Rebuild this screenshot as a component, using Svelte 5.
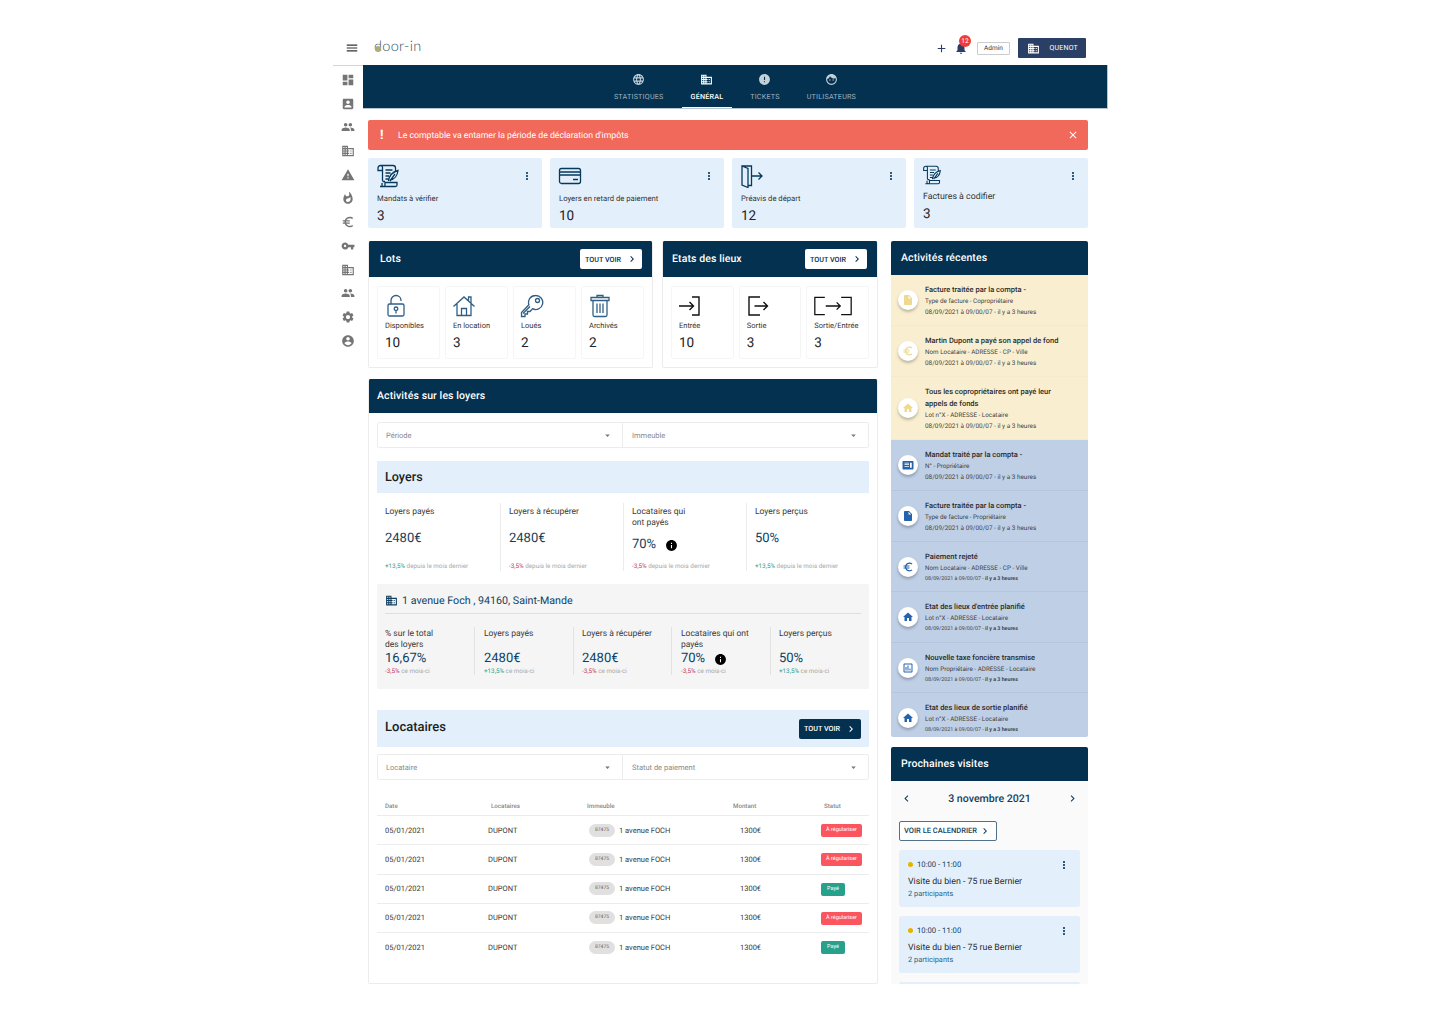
<script>
  // material icon paths
  const icons = {
    menu: 'M3 18h18v-2H3v2zm0-5h18v-2H3v2zm0-7v2h18V6H3z',
    dashboard: 'M3 13h8V3H3v10zm0 8h8v-6H3v6zm10 0h8V11h-8v10zm0-18v6h8V3h-8z',
    contact: 'M3 5v14c0 1.1.89 2 2 2h14c1.1 0 2-.9 2-2V5c0-1.1-.9-2-2-2H5c-1.11 0-2 .9-2 2zm12 4c0 1.66-1.34 3-3 3s-3-1.34-3-3 1.34-3 3-3 3 1.34 3 3zm-9 8c0-2 4-3.1 6-3.1s6 1.1 6 3.1v1H6v-1z',
    people: 'M16 11c1.66 0 2.99-1.34 2.99-3S17.66 5 16 5c-1.66 0-3 1.34-3 3s1.34 3 3 3zm-8 0c1.66 0 2.99-1.34 2.99-3S9.66 5 8 5C6.34 5 5 6.34 5 8s1.34 3 3 3zm0 2c-2.33 0-7 1.17-7 3.5V19h14v-2.5c0-2.33-4.67-3.5-7-3.5zm8 0c-.29 0-.62.02-.97.05 1.16.84 1.97 1.97 1.97 3.45V19h6v-2.5c0-2.33-4.67-3.5-7-3.5z',
    domain: 'M12 7V3H2v18h20V7H12zM6 19H4v-2h2v2zm0-4H4v-2h2v2zm0-4H4V9h2v2zm0-4H4V5h2v2zm4 12H8v-2h2v2zm0-4H8v-2h2v2zm0-4H8V9h2v2zm0-4H8V5h2v2zm10 12h-8v-2h2v-2h-2v-2h2v-2h-2V9h8v10zm-2-8h-2v2h2v-2zm0 4h-2v2h2v-2z',
    warning: 'M1 21h22L12 2 1 21zm12-3h-2v-2h2v2zm0-4h-2v-4h2v4z',
    fire: 'M13.5.67s.74 2.65.74 4.8c0 2.06-1.35 3.73-3.41 3.73-2.07 0-3.63-1.67-3.63-3.73l.03-.36C5.21 7.51 4 10.62 4 14c0 4.42 3.58 8 8 8s8-3.58 8-8C20 8.61 17.41 3.8 13.5.67zM11.71 19c-1.78 0-3.22-1.4-3.22-3.14 0-1.62 1.05-2.76 2.81-3.12 1.77-.36 3.6-1.21 4.62-2.58.39 1.29.59 2.65.59 4.04 0 2.65-2.15 4.8-4.8 4.8z',
    euro: 'M15 18.5c-2.51 0-4.68-1.42-5.76-3.5H15v-2H8.58c-.05-.33-.08-.66-.08-1s.03-.67.08-1H15V9H9.24C10.32 6.92 12.5 5.5 15 5.5c1.61 0 3.09.59 4.23 1.57L21 5.3C19.41 3.87 17.3 3 15 3c-3.92 0-7.24 2.51-8.48 6H3v2h3.06c-.04.33-.06.66-.06 1 0 .34.02.67.06 1H3v2h3.52c1.24 3.49 4.56 6 8.48 6 2.31 0 4.41-.87 6-2.3l-1.78-1.77c-1.13.98-2.6 1.57-4.22 1.57z',
    key: 'M12.65 10C11.83 7.67 9.61 6 7 6c-3.31 0-6 2.69-6 6s2.69 6 6 6c2.61 0 4.83-1.67 5.65-4H17v4h4v-4h2v-4H12.65zM7 14c-1.1 0-2-.9-2-2s.9-2 2-2 2 .9 2 2-.9 2-2 2z',
    settings: 'M19.14 12.94c.04-.3.06-.61.06-.94 0-.32-.02-.64-.07-.94l2.03-1.58c.18-.14.23-.41.12-.61l-1.92-3.32c-.12-.22-.37-.29-.59-.22l-2.39.96c-.5-.38-1.03-.7-1.62-.94l-.36-2.54c-.04-.24-.24-.41-.48-.41h-3.84c-.24 0-.43.17-.47.41l-.36 2.54c-.59.24-1.13.57-1.62.94l-2.39-.96c-.22-.08-.47 0-.59.22L2.74 8.87c-.12.21-.08.47.12.61l2.03 1.58c-.05.3-.09.63-.09.94s.02.64.07.94l-2.03 1.58c-.18.14-.23.41-.12.61l1.92 3.32c.12.22.37.29.59.22l2.39-.96c.5.38 1.03.7 1.62.94l.36 2.54c.05.24.24.41.48.41h3.84c.24 0 .44-.17.47-.41l.36-2.54c.59-.24 1.13-.56 1.62-.94l2.39.96c.22.08.47 0 .59-.22l1.92-3.32c.12-.22.07-.47-.12-.61l-2.01-1.58zM12 15.6c-1.98 0-3.6-1.62-3.6-3.6s1.62-3.6 3.6-3.6 3.6 1.62 3.6 3.6-1.62 3.6-3.6 3.6z',
    account: 'M12 2C6.48 2 2 6.48 2 12s4.48 10 10 10 10-4.48 10-10S17.52 2 12 2zm0 3c1.66 0 3 1.34 3 3s-1.34 3-3 3-3-1.34-3-3 1.34-3 3-3zm0 14.2c-2.5 0-4.71-1.28-6-3.22.03-1.99 4-3.08 6-3.08 1.99 0 5.97 1.09 6 3.08-1.29 1.94-3.5 3.22-6 3.22z',
    globe: 'M11.99 2C6.47 2 2 6.48 2 12s4.47 10 9.99 10C17.52 22 22 17.52 22 12S17.52 2 11.99 2zm6.93 6h-2.95c-.32-1.25-.78-2.45-1.38-3.56 1.84.63 3.37 1.91 4.33 3.56zM12 4.04c.83 1.2 1.48 2.53 1.91 3.96h-3.82c.43-1.43 1.08-2.76 1.91-3.96zM4.26 14C4.1 13.36 4 12.69 4 12s.1-1.36.26-2h3.38c-.08.66-.14 1.32-.14 2 0 .68.06 1.34.14 2H4.26zm.82 2h2.95c.32 1.25.78 2.45 1.38 3.56-1.84-.63-3.37-1.9-4.33-3.56zm2.95-8H5.08c.96-1.66 2.49-2.93 4.33-3.56C8.81 5.55 8.35 6.75 8.03 8zM12 19.96c-.83-1.2-1.48-2.53-1.91-3.96h3.82c-.43 1.43-1.08 2.76-1.91 3.96zM14.34 14H9.66c-.09-.66-.16-1.32-.16-2 0-.68.07-1.35.16-2h4.68c.09.65.16 1.32.16 2 0 .68-.07 1.34-.16 2zm.25 5.56c.6-1.11 1.06-2.31 1.38-3.56h2.95c-.96 1.65-2.49 2.93-4.33 3.56zM16.36 14c.08-.66.14-1.32.14-2 0-.68-.06-1.34-.14-2h3.38c.16.64.26 1.31.26 2s-.1 1.36-.26 2h-3.38z',
    error: 'M12 2C6.48 2 2 6.48 2 12s4.48 10 10 10 10-4.48 10-10S17.52 2 12 2zm1 15h-2v-2h2v2zm0-4h-2V7h2v6z',
    face: 'M9 11.75c-.69 0-1.25.56-1.25 1.25s.56 1.25 1.25 1.25 1.25-.56 1.25-1.25-.56-1.25-1.25-1.25zm6 0c-.69 0-1.25.56-1.25 1.25s.56 1.25 1.25 1.25 1.25-.56 1.25-1.25-.56-1.25-1.25-1.25zM12 2C6.48 2 2 6.48 2 12s4.48 10 10 10 10-4.48 10-10S17.52 2 12 2zm0 18c-4.41 0-8-3.59-8-8 0-.29.02-.58.05-.86 2.36-1.05 4.23-2.98 5.21-5.37C11.07 8.33 14.05 10 17.42 10c.78 0 1.53-.09 2.25-.26.21.71.33 1.47.33 2.26 0 4.41-3.59 8-8 8z',
    bell: 'M12 22c1.1 0 2-.9 2-2h-4c0 1.1.89 2 2 2zm6-6v-5c0-3.07-1.64-5.64-4.5-6.32V4c0-.83-.67-1.5-1.5-1.5s-1.5.67-1.5 1.5v.68C7.63 5.36 6 7.92 6 11v5l-2 2v1h16v-1l-2-2z',
    more: 'M12 8c1.1 0 2-.9 2-2s-.9-2-2-2-2 .9-2 2 .9 2 2 2zm0 2c-1.1 0-2 .9-2 2s.9 2 2 2 2-.9 2-2-.9-2-2-2zm0 6c-1.1 0-2 .9-2 2s.9 2 2 2 2-.9 2-2-.9-2-2-2z',
    right: 'M10 6L8.59 7.41 13.17 12l-4.58 4.59L10 18l6-6z',
    left: 'M15.41 7.41L14 6l-6 6 6 6 1.41-1.41L10.83 12z',
    file: 'M6 2c-1.1 0-1.99.9-1.99 2L4 20c0 1.1.89 2 1.99 2H18c1.1 0 2-.9 2-2V8l-6-6H6zm7 7V3.5L18.5 9H13z',
    home: 'M10 20v-6h4v6h5v-8h3L12 3 2 12h3v8z',
    chart: 'M19 3H5c-1.1 0-2 .9-2 2v14c0 1.1.9 2 2 2h14c1.1 0 2-.9 2-2V5c0-1.1-.9-2-2-2zm0 16H5V5h14v14zM9 17H7v-7h2v7zm4 0h-2V7h2v10zm4 0h-2v-4h2v4z',
    article: 'M21 4H3c-1.1 0-2 .9-2 2v13c0 1.1.9 2 2 2h18c1.1 0 2-.9 2-2V6c0-1.1-.9-2-2-2zM14 9h-9V7.5h9V9zm0 3.2H5v-1.5h9v1.5zm0 3.3H5V14h9v1.5zm5.5 2H16V7.5h3.5v10z',
    info: 'M12 2C6.48 2 2 6.48 2 12s4.48 10 10 10 10-4.48 10-10S17.52 2 12 2zm1 15h-2v-6h2v6zm0-8h-2V7h2v2z',
    caret: 'M7 10l5 5 5-5z',
    close: 'M19 6.41L17.59 5 12 10.59 6.41 5 5 6.41 10.59 12 5 17.59 6.41 19 12 13.41 17.59 19 19 17.59 13.41 12z',
    add: 'M19 13h-6v6h-2v-6H5v-2h6V5h2v6h6v2z'
  };

  // line pictos of the tiles, drawn on a 24 box with a thin stroke
  const lines = {
    scroll: 'M4.500 1.500H17c1.500 0 2.500 1 2.500 2.500v3M4.500 1.500C3 1.500 2 2.500 2 4v2.500h4.500V3.500c0-1.100-.9-2-2-2zM6.500 6.500V17M6.500 17.500H9M4 22.500h15.500c.8 0 1.500-.7 1.500-1.500v-2.500H9V21c0 .8-.7 1.500-1.500 1.500S6 21.800 6 21V19M9.500 6h7M9.500 9h5M9.500 12h3.500M9.500 15h3M12.500 17c.6-5 4-9 9.500-10.500-.5 5-3.500 9-8 9.500M14 17l5-7',
    card: 'M3.500 4.500h17c1.100 0 2 .9 2 2v11c0 1.100-.9 2-2 2h-17c-1.100 0-2-.9-2-2v-11c0-1.100.9-2 2-2zM1.500 8h21M1.500 11h21M15 15.500h5',
    leave: 'M2 2h9.500v19.500H8M2 2l6 2.500v19L2 21zM11.500 12h10.500M18.500 8.500L22 12l-3.500 3.500',
    lock: 'M7 10V6.500C7 3.700 9.200 1.500 12 1.500s5 2.200 5 5v.5M5.500 10h13c.8 0 1.500.7 1.500 1.500v9c0 .8-.7 1.500-1.500 1.500h-13c-.8 0-1.500-.7-1.500-1.500v-9c0-.8.7-1.500 1.500-1.500zM12 13a1.800 1.800 0 1 0 0 3.600A1.800 1.800 0 0 0 12 13zM12 16.600v3',
    house: 'M1.500 12.500L12 3l10.500 9.500M5 10v11.500h14V10M16.500 6.500V3H19v6M9.500 21.500v-7h5v7',
    bigkey: 'M15.500 1.500a7 7 0 0 0-6.600 9.300L1.500 18.500v4h3.500v-2.500h2.500v-2.500H10l2.500-2.800A7 7 0 1 0 15.500 1.500zM17.500 4.500a2 2 0 1 0 0 4 2 2 0 0 0 0-4zM3 19.500l7-7',
    trash: 'M9 3.500V1.500h6v2M5 6.500V21c0 .8.7 1.500 1.500 1.500h11c.8 0 1.500-.7 1.500-1.500V6.500M3 3.500h18v3H3zM9 9.500V19M12 9.500V19M15 9.500V19',
    enter: 'M14 3h7v18h-7M1 12h14.500M11.500 8l4 4-4 4',
    exit: 'M14 3H3v18h11M8.500 12h12.500M17.500 8l4 4-4 4'
  };

  const sideIcons = ['dashboard', 'contact', 'people', 'domain', 'warning', 'fire', 'euro', 'key', 'domain', 'people', 'settings', 'account'];
  const tabs = [
    { label: 'STATISTIQUES', icon: 'globe' },
    { label: 'GÉNÉRAL', icon: 'domain', active: true },
    { label: 'TICKETS', icon: 'error' },
    { label: 'UTILISATEURS', icon: 'face' }
  ];
  const kpis = [
    { label: 'Mandats à vérifier', value: '3', icon: 'scroll' },
    { label: 'Loyers en retard de paiement', value: '10', icon: 'card' },
    { label: 'Préavis de départ', value: '12', icon: 'leave' },
    { label: 'Factures à codifier', value: '3', icon: 'scroll', alt: true }
  ];
  const lots = [
    { label: 'Disponibles', value: '10', icon: 'lock' },
    { label: 'En location', value: '3', icon: 'house' },
    { label: 'Loués', value: '2', icon: 'bigkey' },
    { label: 'Archivés', value: '2', icon: 'trash' }
  ];
  const rents = [
    { label: 'Loyers payés', value: '2480€', delta: '+13,5%', up: true },
    { label: 'Loyers à récupérer', value: '2480€', delta: '-3,5%' },
    { label: 'Locataires qui\nont payés', value: '70%', delta: '-3,5%', info: true },
    { label: 'Loyers perçus', value: '50%', delta: '+13,5%', up: true }
  ];
  const building = [
    { label: '% sur le total\ndes loyers', value: '16,67%', delta: '-3,5%' },
    { label: 'Loyers payés', value: '2480€', delta: '+13,5%', up: true },
    { label: 'Loyers à récupérer', value: '2480€', delta: '-3,5%' },
    { label: 'Locataires qui ont\npayés', value: '70%', delta: '-3,5%', info: true },
    { label: 'Loyers perçus', value: '50%', delta: '+13,5%', up: true }
  ];
  const tenants = [false, false, true, false, true];
  const activity = [
    { title: 'Facture traitée par la compta  -', sub: 'Type de facture - Copropriétaire', icon: 'file', h: 51 },
    { title: 'Martin Dupont a payé son appel de fond', sub: 'Nom Locataire - ADRESSE - CP - Ville', icon: 'euro', h: 51 },
    { title: 'Tous les copropriétaires ont payé leur appels de fonds', sub: 'Lot n°X - ADRESSE - Locataire', icon: 'home', h: 63 },
    { title: 'Mandat traité par la compta  -', sub: 'N° - Propriétaire', icon: 'article', h: 51, blue: true },
    { title: 'Facture traitée par la compta  -', sub: 'Type de facture - Propriétaire', icon: 'file', h: 51, blue: true },
    { title: 'Paiement rejeté', sub: 'Nom Locataire - ADRESSE - CP - Ville', icon: 'euro', h: 50, blue: true, small: true },
    { title: "Etat des lieux d'entrée planifié", sub: 'Lot n°X - ADRESSE - Locataire', icon: 'home', h: 51, blue: true, small: true },
    { title: 'Nouvelle taxe foncière transmise', sub: 'Nom Propriétaire - ADRESSE - Locataire', icon: 'chart', h: 50, blue: true, small: true },
    { title: 'Etat des lieux de sortie planifié', sub: 'Lot n°X - ADRESSE - Locataire', icon: 'home', h: 50, blue: true, small: true }
  ];
</script>

{#snippet icon(name, cls)}
  <svg class="ico {cls}" viewBox="0 0 24 24" aria-hidden="true"><path d={icons[name]} /></svg>
{/snippet}

{#snippet picto(name, cls)}
  <svg class="picto {cls}" viewBox="0 0 24 24" aria-hidden="true"><path d={lines[name]} /></svg>
{/snippet}

{#snippet seeAll(cls)}
  <button class="see-all {cls}">TOUT VOIR {@render icon('right', 'see-chev')}</button>
{/snippet}

{#snippet selects(a, b)}
  <div class="selects">
    <div class="select">{a}{@render icon('caret', 'caret')}</div>
    <div class="select">{b}{@render icon('caret', 'caret')}</div>
  </div>
{/snippet}

{#snippet metric(m)}
  <div class="metric-label">{m.label}</div>
  <div class="metric-value">{m.value}{#if m.info}{@render icon('info', 'info')}{/if}</div>
{/snippet}

<div class="frame">
  <header class="topbar">
    <div class="brand">
      {@render icon('menu', 'burger')}
      <span class="logo"><i class="logo-dot"></i>door-in</span>
    </div>
    <div class="actions">
      {@render icon('add', 'plus')}
      <span class="bell">{@render icon('bell', 'bell-ico')}<b class="badge">12</b></span>
      <button class="admin">Admin</button>
      <button class="company">{@render icon('domain', 'company-ico')}QUENOT</button>
    </div>
  </header>

  <div class="body">
    <nav class="side">
      {#each sideIcons as name}
        {@render icon(name, 'side-ico')}
      {/each}
    </nav>

    <div class="content">
      <div class="tabs">
        {#each tabs as tab}
          <div class="tab" class:active={tab.active}>
            {@render icon(tab.icon, 'tab-ico')}
            <span>{tab.label}</span>
          </div>
        {/each}
      </div>

      <main class="main">
        <div class="alert">
          <span class="alert-mark">!</span>
          <span class="alert-text">Le comptable va entamer la période de déclaration d'impôts</span>
          {@render icon('close', 'alert-close')}
        </div>

        <div class="kpis">
          {#each kpis as k}
            <div class="kpi" class:alt={k.alt}>
              <div class="kpi-top">
                {@render picto(k.icon, 'kpi-picto')}
                {@render icon('more', 'more')}
              </div>
              <div class="kpi-label">{k.label}</div>
              <div class="kpi-value">{k.value}</div>
            </div>
          {/each}
        </div>

        <div class="columns">
          <div class="left">
            <div class="tiles-row">
              <section class="card lots">
                <div class="card-head">
                  <h2>Lots</h2>
                  {@render seeAll('')}
                </div>
                <div class="tiles">
                  {#each lots as t}
                    <div class="tile">
                      {@render picto(t.icon, 'tile-picto blue')}
                      <div class="tile-label">{t.label}</div>
                      <div class="tile-value">{t.value}</div>
                    </div>
                  {/each}
                </div>
              </section>

              <section class="card states">
                <div class="card-head">
                  <h2>Etats des lieux</h2>
                  {@render seeAll('')}
                </div>
                <div class="tiles">
                  <div class="tile">
                    {@render picto('enter', 'tile-picto black')}
                    <div class="tile-label">Entrée</div>
                    <div class="tile-value">10</div>
                  </div>
                  <div class="tile">
                    {@render picto('exit', 'tile-picto black')}
                    <div class="tile-label">Sortie</div>
                    <div class="tile-value">3</div>
                  </div>
                  <div class="tile">
                    <svg class="picto tile-picto black both" viewBox="0 0 44 24" aria-hidden="true"><path d="M13 2.500H2v19h11M31 2.500h11v19H31M14 12h16M26 8l4 4-4 4" /></svg>
                    <div class="tile-label">Sortie/Entrée</div>
                    <div class="tile-value">3</div>
                  </div>
                </div>
              </section>
            </div>

            <section class="card rents">
              <div class="card-head rents-head"><h2>Activités sur les loyers</h2></div>
              <div class="rents-body">
                {@render selects('Période', 'Immeuble')}

                <div class="band"><h3>Loyers</h3></div>
                <div class="stats">
                  {#each rents as m}
                    <div class="stat">
                      {@render metric(m)}
                      <div class="delta"><em class:up={m.up}>{m.delta}</em> depuis le mois dernier</div>
                    </div>
                  {/each}
                </div>

                <div class="address">
                  <div class="address-title">{@render icon('domain', 'address-ico')}1 avenue Foch , 94160, Saint-Mande</div>
                  <div class="address-stats">
                    {#each building as m}
                      <div class="astat">
                        {@render metric(m)}
                        <div class="delta"><em class:up={m.up}>{m.delta}</em> ce mois-ci</div>
                      </div>
                    {/each}
                  </div>
                </div>

                <div class="band tenants-band">
                  <h3>Locataires</h3>
                  {@render seeAll('dark')}
                </div>
                {@render selects('Locataire', 'Statut de paiement')}

                <div class="thead">
                  <span>Date</span><span>Locataires</span><span>Immeuble</span><span>Montant</span><span>Statut</span>
                </div>
                {#each tenants as paid}
                  <div class="trow">
                    <span>05/01/2021</span>
                    <span>DUPONT</span>
                    <span class="addr"><b class="chip">87475</b>1 avenue FOCH</span>
                    <span>1300€</span>
                    <span class="status-cell"><b class="status" class:paid>{paid ? 'Payé' : 'À régulariser'}</b></span>
                  </div>
                {/each}
              </div>
            </section>
          </div>

          <aside class="right">
            <section class="card recent">
              <div class="card-head side-head"><h2>Activités récentes</h2></div>
              {#each activity as a}
                <div class="act" class:blue={a.blue} style="height:{a.h}px">
                  <span class="act-dot">{@render icon(a.icon, 'act-ico')}</span>
                  <div class="act-text">
                    <div class="act-title">{a.title}</div>
                    <div class="act-sub">{a.sub}</div>
                    <div class="act-date" class:small={a.small}>08/09/2021 à 09/00/07 - <span>il y a 3 heures</span></div>
                  </div>
                </div>
              {/each}
            </section>

            <section class="card visits">
              <div class="card-head side-head"><h2>Prochaines visites</h2></div>
              <div class="visits-body">
                <div class="date-row">
                  {@render icon('left', 'date-chev')}
                  <span>3 novembre 2021</span>
                  {@render icon('right', 'date-chev')}
                </div>
                <button class="calendar">VOIR LE CALENDRIER {@render icon('right', 'see-chev')}</button>
                {#each [0, 1] as v}
                  <div class="visit">
                    <div class="visit-time"><i></i>10:00 - 11:00{@render icon('more', 'more')}</div>
                    <div class="visit-title">Visite du bien - 75 rue Bernier</div>
                    <div class="visit-people">2 participants</div>
                  </div>
                {/each}
                <div class="visit"></div>
              </div>
            </section>
          </aside>
        </div>
      </main>
    </div>
  </div>
</div>

<style>
  :global(body) {
    margin: 0;
    background: #fff;
    font-family: Roboto, "Liberation Sans", sans-serif;
    color: #2b2b2b;
    text-rendering: geometricPrecision;
  }
  h2, h3 { margin: 0; font-weight: 500; }
  button { font-family: inherit; cursor: pointer; text-rendering: geometricPrecision; }
  .ico { fill: currentColor; display: block; flex: none; }
  .picto { fill: none; stroke: #063a5c; stroke-width: 1.300; display: block; flex: none; }

  .frame {
    width: 775px;
    height: 954px;
    margin: 30px 0 0 333px;
    overflow: hidden;
    display: flex;
    flex-direction: column;
  }

  /* top bar */
  .topbar {
    height: 35px;
    flex: none;
    display: flex;
    align-items: center;
    justify-content: space-between;
    padding: 0 22px 3px 12px;
    box-sizing: border-box;
  }
  .brand { display: flex; align-items: center; gap: 15px; padding-top: 4px; }
  .burger { width: 14px; height: 14px; color: #333; }
  .logo { position: relative; font-family: Lato, Roboto, sans-serif; font-size: 14.500px; font-weight: 300; color: #2f5068; letter-spacing: .3px; line-height: 1; top: -1px; }
  .logo-dot { position: absolute; left: 1px; top: 6px; width: 6px; height: 6px; border-radius: 50%; background: #a9ad7e; }
  .actions { display: flex; align-items: center; padding-top: 4px; }
  .plus { width: 13px; height: 13px; color: #2c3e63; margin-right: 6px; }
  .bell { position: relative; display: block; width: 12px; height: 13px; margin-right: 11px; top: -1px; }
  .bell-ico { width: 14px; height: 14px; color: #2c3e63; }
  .badge { position: absolute; left: 5px; top: -6px; width: 12px; height: 12px; border-radius: 50%; background: #ee3b3b; color: #fff; font-size: 6.500px; font-weight: 400; line-height: 12px; text-align: center; }
  .admin { width: 33px; height: 13px; padding: 0; background: #fff; border: 1px solid #ccc; border-radius: 1px; font-size: 6.500px; color: #333; margin-right: 8px; }
  .company { width: 68px; height: 20px; padding: 0 8px 0 9px; background: #2a3f66; color: #fff; border: 0; border-radius: 1px; display: flex; align-items: center; justify-content: space-between; font-size: 7px; font-weight: 400; letter-spacing: .2px; }
  .company-ico { width: 13px; height: 13px; }

  .body { flex: 1; min-height: 0; display: flex; }

  /* side rail */
  .side {
    width: 30px;
    flex: none;
    box-sizing: border-box;
    border-top: 1px solid #d5d5d5;
    padding-top: 7px;
    display: flex;
    flex-direction: column;
    align-items: center;
    gap: 9.700px;
  }
  .side-ico { width: 14px; height: 14px; color: #757575; }

  .content { flex: 1; min-width: 0; display: flex; flex-direction: column; }
  .tabs {
    height: 44px;
    flex: none;
    box-sizing: border-box;
    background: #03314f;
    border: 1px solid #b5c4cf;
    border-width: 0 1px 1px 0;
    display: flex;
    justify-content: center;
    gap: 9px;
  }
  .tab {
    height: 43px;
    box-sizing: border-box;
    padding: 8px 9px 0;
    display: flex;
    flex-direction: column;
    align-items: center;
    gap: 6px;
    font-size: 7.200px;
    letter-spacing: .2px;
    color: #9fb2bf;
  }
  .tab-ico { width: 13px; height: 13px; color: #c3d0d9; }
  .tab.active { color: #fff; font-weight: 500; border-bottom: 1px solid #fff; }
  .tab.active .tab-ico { color: #fff; }

  .main { flex: 1; min-height: 0; padding: 11px 20px 0 5px; display: flex; flex-direction: column; }

  .alert {
    height: 30px;
    flex: none;
    background: #f0695b;
    border-radius: 2px;
    display: flex;
    align-items: center;
    color: #fff;
    padding: 0 9px 0 12px;
  }
  .alert-mark { width: 18px; font-size: 13px; font-weight: 700; }
  .alert-text { flex: 1; font-size: 8.700px; font-weight: 400; padding-top: 1px; }
  .alert-close { width: 12px; height: 12px; }

  .kpis { display: grid; grid-template-columns: repeat(4, 174px); gap: 8px; margin-top: 8px; flex: none; }
  .kpi { height: 70px; box-sizing: border-box; background: #e3f0fc; border-radius: 2px; padding: 6px 9px 0; }
  .kpi-top { display: flex; justify-content: space-between; height: 24px; margin-left: -1px; }
  .kpi-picto { width: 24px; height: 24px; }
  .more { width: 12px; height: 12px; color: #063a5c; margin-top: 6px; }
  .kpi-label { margin-top: 6px; font-size: 7.700px; line-height: 10px; color: #333; }
  .kpi-value { margin-top: 4px; font-size: 13.500px; line-height: 16px; color: #222; }
  .kpi.alt .kpi-picto { width: 20px; height: 20px; margin-top: 1px; }
  .kpi.alt .kpi-label { margin-top: 4px; font-size: 8.800px; line-height: 11px; }
  .kpi.alt .kpi-value { margin-top: 3px; }

  .columns { flex: 1; min-height: 0; margin-top: 13px; display: flex; gap: 13px; }
  .left { width: 510px; flex: none; display: flex; flex-direction: column; gap: 11px; }
  .right { width: 197px; flex: none; display: flex; flex-direction: column; gap: 10px; }

  .card { box-sizing: border-box; border: 1px solid #ececec; border-top: 0; border-radius: 2px; overflow: hidden; background: #fff; }
  .card-head {
    height: 36px;
    box-sizing: border-box;
    background: #03314f;
    color: #fff;
    display: flex;
    align-items: center;
    justify-content: space-between;
    padding: 0 10px 0 11px;
  }
  .card-head h2 { font-size: 10.500px; letter-spacing: .1px; margin-top: -2px; }

  .tiles-row { height: 127px; flex: none; display: flex; gap: 9px; }
  .lots { width: 285px; }
  .states { width: 216px; }
  .states .card-head { padding-left: 9px; }
  .tiles { display: flex; gap: 5px; padding: 9px 8px 0; }
  .tile { width: 63px; height: 73px; box-sizing: border-box; border: 1px solid #f6f6f6; border-radius: 2px; padding: 7px 0 0 7px; }
  .tile-picto { width: 24px; height: 24px; margin-left: -1px; }
  .tile-picto.blue { stroke: #2f5f86; }
  .tile-picto.black { stroke: #111; stroke-width: 1.400; }
  .tile-picto.both { width: 40px; }
  .tile-label { margin-top: 3px; font-size: 7.500px; line-height: 10px; color: #333; white-space: nowrap; }
  .tile-value { margin-top: 4px; font-size: 13.500px; line-height: 16px; color: #222; }

  .see-all {
    width: 62px;
    height: 20px;
    padding: 0 4px 0 5px;
    background: #fff;
    color: #03314f;
    border: 0;
    border-radius: 2px;
    display: flex;
    align-items: center;
    justify-content: space-between;
    font-size: 7.200px;
    font-weight: 500;
    white-space: nowrap;
  }
  .see-all.dark { background: #03314f; color: #fff; }
  .see-chev { width: 12px; height: 12px; }

  .rents { flex: 1; min-height: 0; }
  .rents-head { height: 34px; padding-left: 8px; }
  .rents-body { padding: 9px 8px 0; }

  .selects { display: flex; height: 26px; border: 1px solid #ececec; border-radius: 2px; box-sizing: border-box; }
  .select { flex: 1; display: flex; align-items: center; justify-content: space-between; padding: 0 9px 0 8px; font-size: 7.500px; color: #8a8a8a; }
  .select + .select { border-left: 1px solid #ececec; padding-left: 9px; }
  .caret { width: 11px; height: 11px; color: #777; }

  .band { height: 32px; margin-top: 13px; background: #e3f0fc; display: flex; align-items: center; justify-content: space-between; padding: 0 8px; }
  .band h3 { font-size: 12.600px; color: #1d1d1d; }
  .tenants-band { height: 37px; margin-top: 21px; }
  .tenants-band h3 { font-size: 13px; margin-top: -3px; }
  .tenants-band + .selects { margin-top: 7px; }

  .stats { display: grid; grid-template-columns: 123px 123px 123px 123px; margin-top: 10px; height: 68px; }
  .stat { padding-left: 8px; border-left: 1px solid #ececec; position: relative; }
  .stat:first-child { border-left: 0; }
  .metric-label { font-size: 8.500px; line-height: 11px; color: #3a3a3a; white-space: pre-line; padding-top: 4px; }
  .stat .metric-value { margin-top: 13px; }
  .stat:nth-child(3) .metric-value { margin-top: 8px; }
  .metric-value { display: flex; align-items: center; font-size: 13px; line-height: 16px; color: #0e3f60; font-weight: 400; }
  .info { width: 13px; height: 13px; color: #000; margin-left: 9px; }
  .delta { position: absolute; bottom: 0; font-size: 6.300px; color: #a8a8a8; white-space: nowrap; line-height: 8px; }
  .delta em { font-style: normal; color: #c2395f; }
  .delta em.up { color: #2a9d8f; }
  .stat .delta { bottom: 1px; }

  .address { margin-top: 13px; height: 105px; box-sizing: border-box; background: #f5f5f5; border-radius: 2px; padding: 8px 8px 0; }
  .address-title { display: flex; align-items: center; gap: 4px; height: 22px; border-bottom: 1px solid #dfdfdf; font-size: 10.700px; color: #123f60; padding-bottom: 4px; box-sizing: border-box; }
  .address-ico { width: 13px; height: 13px; color: #123f60; }
  .address-stats { display: grid; grid-template-columns: 89px 99px 98px 99px 91px; margin-top: 13px; height: 48px; }
  .astat { position: relative; padding-left: 9px; border-left: 1px solid #e2e2e2; }
  .astat:nth-child(3), .astat:nth-child(5) { padding-left: 8px; }
  .astat:first-child { padding-left: 0; border-left: 0; }
  .astat .metric-label { height: 24px; box-sizing: border-box; padding-top: 2px; }
  .astat .metric-value { margin-top: 0; }

  .thead, .trow { display: grid; align-items: center; padding-left: 8px; }
  .thead { grid-template-columns: 106px 96px 146px 91px 1fr; height: 29px; margin-top: 6px; padding-top: 10px; box-sizing: border-box; font-size: 6.200px; font-weight: 500; color: #888; }
  .trow { grid-template-columns: 103px 101px 151px 81px 1fr; height: 29.250px; border-top: 1px solid #ececec; box-sizing: border-box; font-size: 7.500px; color: #3a3a3a; }
  .addr { display: flex; align-items: center; gap: 4px; }
  .chip { width: 26px; height: 13px; border-radius: 7px; background: #e0e0e0; font-size: 5px; font-weight: 400; color: #666; line-height: 13px; text-align: center; flex: none; }
  .status-cell { display: flex; align-items: center; padding-top: 1px; }
  .status { height: 13px; line-height: 13px; padding: 0 5px; background: #fb5660; color: #fff; font-size: 5.500px; font-weight: 400; border-radius: 2px; }
  .status.paid { background: #27a08c; padding: 0 6px; }

  /* right column */
  .recent { height: 496px; flex: none; border: 0; }
  .side-head { height: 34px; padding-left: 10px; }
  .act { display: flex; align-items: center; box-sizing: border-box; background: #f9efd0; border-bottom: 1px solid #f3ead0; padding-left: 7px; gap: 7px; }
  .act.blue { background: #bfcfe6; border-bottom-color: #b4c5dd; }
  .act-dot { width: 20px; height: 20px; flex: none; border-radius: 50%; background: #fff; box-shadow: 0 2px 3px rgba(0, 0, 0, .25); display: flex; align-items: center; justify-content: center; }
  .act-ico { width: 12px; height: 12px; color: #eed98f; }
  .act.blue .act-ico { color: #2563ae; }
  .act-text { padding-top: 1px; }
  .act-title { font-size: 7.500px; line-height: 12px; font-weight: 500; color: #2b2b2b; width: 142px; }
  .act-sub { font-size: 6.300px; line-height: 10px; color: #444; }
  .act-date { font-size: 6.400px; line-height: 10px; color: #444; margin-top: 1px; }
  .act-date.small { font-size: 5.300px; }
  .act-date.small span { font-weight: 700; }

  .visits { flex: 1; min-height: 0; border: 0; }
  .visits-body { background: #fafafa; height: 100%; padding: 0 8px; }
  .date-row { display: flex; align-items: center; justify-content: space-between; height: 34px; font-size: 10.600px; font-weight: 500; color: #123f60; padding: 0 1px; }
  .date-chev { width: 13px; height: 13px; color: #123f60; }
  .calendar { width: 98px; height: 20px; margin-top: 6px; padding: 0 5px 1px 4px; background: #fff; border: 1px solid #54718a; border-radius: 2px; color: #123f60; display: flex; align-items: center; justify-content: space-between; font-size: 7.500px; font-weight: 500; white-space: nowrap; }
  .visit { width: 181px; height: 57px; box-sizing: border-box; background: #e3f0fc; border-radius: 2px; margin-top: 9px; padding: 9px 9px 0; }
  .visit-time { display: flex; align-items: center; height: 11px; font-size: 7.700px; color: #123f60; }
  .visit-time i { width: 5px; height: 5px; border-radius: 50%; background: #e3b400; margin-right: 4px; }
  .visit-time .more { margin: 0 1px 0 auto; }
  .visit-title { margin-top: 7px; font-size: 8.800px; line-height: 11px; color: #2b2b2b; }
  .visit-people { font-size: 7.400px; line-height: 11px; color: #2e5f84; }
</style>
